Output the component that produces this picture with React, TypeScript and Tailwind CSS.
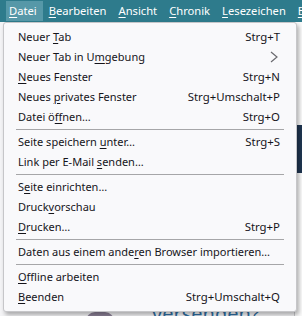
import { ReactNode } from 'react';

// Menu entries for the "Datei" menu
type Entry =
  | { kind: 'item'; label: ReactNode; shortcut?: string; submenu?: boolean }
  | { kind: 'sep' };

const u = (c: string) => <span className="underline underline-offset-2">{c}</span>;

const entries: Entry[] = [
  { kind: 'item', label: <>Neuer {u('T')}ab</>, shortcut: 'Strg+T' },
  { kind: 'item', label: <>Neuer Tab in U{u('m')}gebung</>, submenu: true },
  { kind: 'item', label: <>{u('N')}eues Fenster</>, shortcut: 'Strg+N' },
  { kind: 'item', label: <>Neues {u('p')}rivates Fenster</>, shortcut: 'Strg+Umschalt+P' },
  { kind: 'item', label: <>Datei ö{u('f')}fnen…</>, shortcut: 'Strg+O' },
  { kind: 'sep' },
  { kind: 'item', label: <>Seite speichern {u('u')}nter…</>, shortcut: 'Strg+S' },
  { kind: 'item', label: <>Link per E-Mail {u('s')}enden…</> },
  { kind: 'sep' },
  { kind: 'item', label: <>S{u('e')}ite einrichten…</> },
  { kind: 'item', label: <>Druck{u('v')}orschau</> },
  { kind: 'item', label: <>{u('D')}rucken…</>, shortcut: 'Strg+P' },
  { kind: 'sep' },
  { kind: 'item', label: <>Daten aus einem ande{u('r')}en Browser importieren…</> },
  { kind: 'sep' },
  { kind: 'item', label: <>{u('O')}ffline arbeiten</> },
  { kind: 'item', label: <>{u('B')}eenden</>, shortcut: 'Strg+Umschalt+Q' },
];

const topMenus = ['Datei', 'Bearbeiten', 'Ansicht', 'Chronik', 'Lesezeichen', 'Extras'];

export default function App() {
  return (
    <div
      className="relative w-[302px] h-[316px] overflow-hidden bg-[#f4f4f6]"
      style={{ fontFamily: '"Noto Sans", "Open Sans", sans-serif' }}
    >
      {/* Menu bar */}
      <div className="flex h-[22px] items-center overflow-hidden whitespace-nowrap bg-[#2e7b8c] pl-[6px] text-[11.2px] text-white">
        {topMenus.map((m, i) => (
          <div
            key={m}
            className={`flex h-[20px] shrink-0 items-center pl-[3px] pr-[6px] mr-[3px] ${i === 0 ? 'bg-[#5698a8]' : ''}`}
          >
            {u(m[0])}
            {m.slice(1)}
          </div>
        ))}
      </div>

      {/* Page behind the menu */}
      <div className="flex h-[294px]">
        <div className="flex-1" />
        <div className="flex w-[8px] flex-col border-l border-[#c9c9cc] bg-[#fafafa]">
          <div className="h-[103px]" />
          <div className="h-[48px] bg-[#1f3550]" />
        </div>
      </div>
      <div className="absolute bottom-[-13px] left-[152px] text-[20px] text-[#2f6fa3]">versenden?</div>
      <div className="absolute bottom-[-14px] left-[86px] h-[18px] w-[28px] rounded-full bg-[#8a7f95]" />

      {/* Dropdown */}
      <div className="absolute left-[3px] top-[22px] w-[294px] rounded-[3px] border border-[#c6c6c9] bg-[#f9f9fb] py-[4px] text-[11px] text-[#15141a] shadow-[2px_3px_4px_rgba(0,0,0,0.3)]">
        {entries.map((e, i) =>
          e.kind === 'sep' ? (
            <div key={i} className="mx-[12px] my-[2px] h-px bg-[#a6a6a8]" />
          ) : (
            <div key={i} className="flex h-[20px] items-center pl-[14px] pr-[16px]">
              <span className="flex-1 whitespace-nowrap">{e.label}</span>
              {e.shortcut && <span className="whitespace-nowrap text-[11.4px]">{e.shortcut}</span>}
              {e.submenu && (
                <svg width="10" height="12" viewBox="0 0 10 12" className="mr-[1px]">
                  <path d="M2 1 L8 6 L2 11" fill="none" stroke="#6a6a6f" strokeWidth="1.2" />
                </svg>
              )}
            </div>
          )
        )}
      </div>
    </div>
  );
}
